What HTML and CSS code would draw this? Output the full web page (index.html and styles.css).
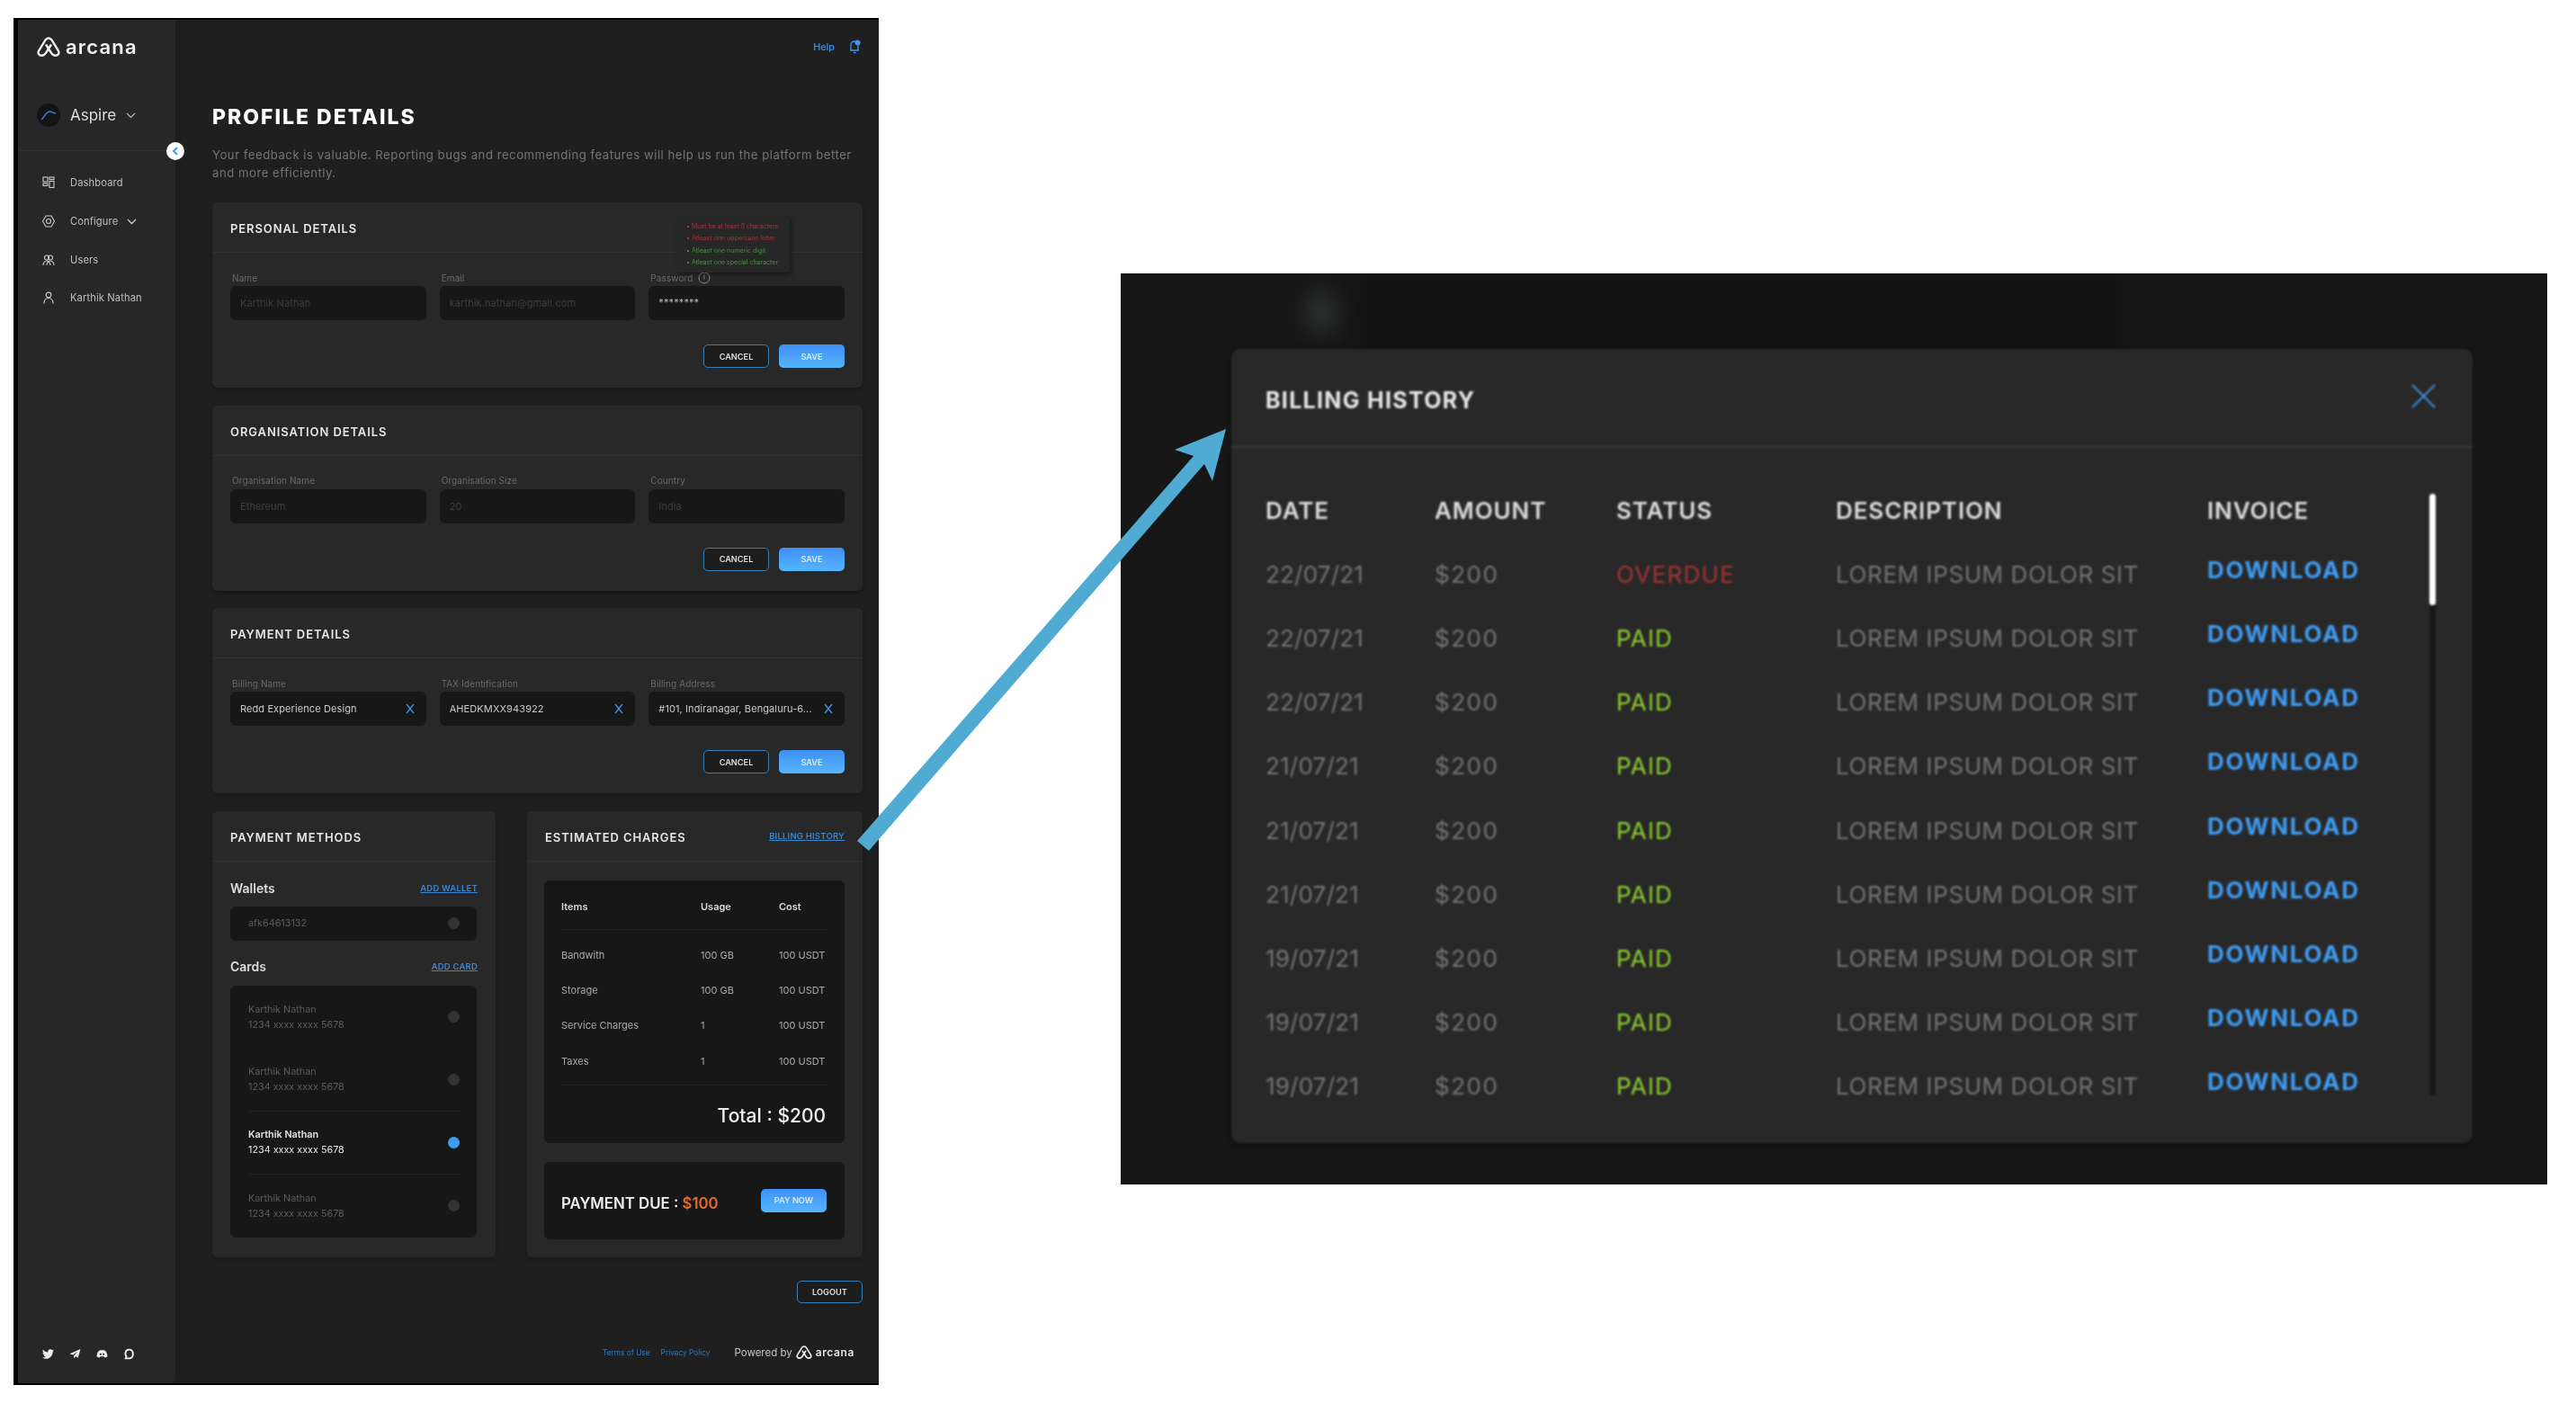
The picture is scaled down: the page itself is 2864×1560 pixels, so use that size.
FILE: index.html
```html
<!DOCTYPE html>
<html lang="en">

<head>
    <meta charset="UTF-8">
    <title>Profile Details</title>
    <link rel="stylesheet" href="styles.css">
</head>

<body>
    <div class="canvas">
        <!-- left screenshot: profile page -->
        <div class="app">
            <aside class="sidebar">
                <div class="logo">
                    <svg class="logo-mark" viewBox="0 0 26 22" fill="none" stroke="#eee" stroke-width="2.4" stroke-linejoin="round">
                        <path d="M13 1.5c-2.200 0-3.300 1.500-4.200 3L2.200 15.300c-1.700 2.900.2 5.500 3.200 5.500 2.200 0 3.500-1.200 4.600-2.900l6-9.400" />
                        <path d="M13 1.500c2.200 0 3.300 1.500 4.200 3l6.600 10.800c1.700 2.900-.2 5.500-3.200 5.500-2.200 0-3.500-1.200-4.600-2.900l-6-9.400" />
                    </svg>
                    <span class="logo-text">arcana</span>
                </div>
                <div class="workspace">
                    <span class="workspace-avatar">
                        <svg width="18" height="12" viewBox="0 0 18 12" fill="none" stroke="#3f74d6" stroke-width="1.5">
                            <path d="M1 11C4 9 6 2 10 2c3 0 4 2 7 2" />
                        </svg>
                    </span>
                    <span class="workspace-name">Aspire</span>
                    <svg class="chevron" width="11" height="7" viewBox="0 0 11 7" fill="none" stroke="#bbb" stroke-width="1.200">
                        <path d="M1 1l4.500 4.500L10 1" />
                    </svg>
                </div>
                <ul class="nav">
                    <li>
                        <svg viewBox="0 0 14 14" fill="none" stroke="#ccc" stroke-width="1.100">
                            <rect x="1" y="1" width="5" height="5" />
                            <rect x="8" y="1" width="5" height="2.500" />
                            <rect x="1" y="8" width="5" height="2.500" />
                            <rect x="8" y="5.500" width="5" height="7" />
                        </svg>
                        <span>Dashboard</span>
                    </li>
                    <li>
                        <svg viewBox="0 0 14 14" fill="none" stroke="#ccc" stroke-width="1.100">
                            <path d="M4 1h6l3.500 6L10 13H4L.5 7z" />
                            <circle cx="7" cy="7" r="2.500" />
                        </svg>
                        <span>Configure</span>
                        <svg class="chevron" width="11" height="7" viewBox="0 0 11 7" fill="none" stroke="#ccc" stroke-width="1.300">
                            <path d="M1 1l4.500 4.500L10 1" />
                        </svg>
                    </li>
                    <li>
                        <svg viewBox="0 0 14 14" fill="none" stroke="#ccc" stroke-width="1.100">
                            <circle cx="5" cy="4.500" r="2.500" />
                            <circle cx="9" cy="4.500" r="2.500" />
                            <path d="M1 13c0-3 2-5 4-5s4 2 4 5M5 13c0-3 2-5 4-5s4 2 4 5" />
                        </svg>
                        <span>Users</span>
                    </li>
                    <li>
                        <svg viewBox="0 0 14 14" fill="none" stroke="#ccc" stroke-width="1.200">
                            <circle cx="7" cy="4" r="2.800" />
                            <path d="M2 13.500c0-3.500 2-6 5-6s5 2.500 5 6" />
                        </svg>
                        <span>Karthik Nathan</span>
                    </li>
                </ul>
                <div class="social">
                    <svg viewBox="0 0 24 24" fill="#eee">
                        <path d="M23.953 4.57a10 10 0 01-2.825.775 4.958 4.958 0 002.163-2.723c-.951.555-2.005.959-3.127 1.184a4.920 4.920 0 00-8.384 4.482C7.690 8.095 4.067 6.130 1.640 3.162a4.822 4.822 0 00-.666 2.475c0 1.710.870 3.213 2.188 4.096a4.904 4.904 0 01-2.228-.616v.060a4.923 4.923 0 003.946 4.827 4.996 4.996 0 01-2.212.085 4.936 4.936 0 004.604 3.417 9.867 9.867 0 01-6.102 2.105c-.390 0-.779-.023-1.170-.067a13.995 13.995 0 007.557 2.209c9.053 0 13.998-7.496 13.998-13.985 0-.210 0-.420-.015-.630A9.935 9.935 0 0024 4.590z" />
                    </svg>
                    <svg viewBox="0 0 24 24" fill="#eee">
                        <path d="M23 2L1 11.500l6.500 2.500L17 7l-7.500 8.500V21l3.500-4 5 3z" />
                    </svg>
                    <svg viewBox="0 0 24 24" fill="#eee">
                        <path fill-rule="evenodd" d="M6 5c4-1 8-1 12 0 3 2 5 7 5 12-2 1.500-4 2-6 2.500L15.500 17h-7L7 19.500C5 19 3 18.500 1 17 1 12 3 7 6 5zm3 5.500a2 2 0 100 4 2 2 0 000-4zm6 0a2 2 0 100 4 2 2 0 000-4z" />
                    </svg>
                    <svg viewBox="0 0 24 24" fill="none" stroke="#eee" stroke-width="3.500">
                        <path d="M12 3c5 0 8 3.500 8 9s-3 9-8 9H5l1.500-4C5 15 4.500 13.500 4.500 12 4.500 6.500 7 3 12 3z" />
                    </svg>
                </div>
                <span class="collapse-btn">
                    <svg width="6" height="10" viewBox="0 0 6 10" fill="none" stroke="#3d94ee" stroke-width="1.800">
                        <path d="M5 1L1 5l4 4" />
                    </svg>
                </span>
            </aside>

            <main class="main">
                <div class="topbar">
                    <a class="help">Help</a>
                    <svg width="13" height="16" viewBox="0 0 13 16" fill="none" stroke="#3d94ee" stroke-width="1.300">
                        <path d="M2 12V6c0-2.500 1.500-4 4-4s4 1.500 4 4v6zM1 12h10M5 14.500h2.500" />
                        <circle cx="9.500" cy="3.500" r="3" fill="#3d94ee" stroke="none" />
                    </svg>
                </div>
                <h1 class="page-title">PROFILE DETAILS</h1>
                <p class="page-sub">Your feedback is valuable. Reporting bugs and recommending features will help us run the platform better and more efficiently.</p>

                <section class="card form-card">
                    <h2 class="card-head">PERSONAL DETAILS</h2>
                    <div class="fields">
                        <div class="field">
                            <label>Name</label>
                            <div class="input muted">Karthik Nathan</div>
                        </div>
                        <div class="field">
                            <label>Email</label>
                            <div class="input muted">karthik.nathan@gmail.com</div>
                        </div>
                        <div class="field">
                            <label>Password
                                <svg class="info" width="14" height="14" viewBox="0 0 14 14" fill="none" stroke="#8a8a8a">
                                    <circle cx="7" cy="7" r="6" />
                                    <path d="M7 3.500v5" />
                                </svg>
                            </label>
                            <div class="input pass">********</div>
                        </div>
                    </div>
                    <div class="actions">
                        <button class="btn btn-line">CANCEL</button>
                        <button class="btn btn-fill">SAVE</button>
                    </div>
                    <ul class="pass-tip">
                        <li class="bad">Must be at least 8 characters</li>
                        <li class="bad">Atleast one uppercase letter</li>
                        <li class="good">Atleast one numeric digit</li>
                        <li class="good">Atleast one special character</li>
                    </ul>
                </section>

                <section class="card form-card">
                    <h2 class="card-head">ORGANISATION DETAILS</h2>
                    <div class="fields">
                        <div class="field">
                            <label>Organisation Name</label>
                            <div class="input muted">Ethereum</div>
                        </div>
                        <div class="field">
                            <label>Organisation Size</label>
                            <div class="input muted">20</div>
                        </div>
                        <div class="field">
                            <label>Country</label>
                            <div class="input muted">India</div>
                        </div>
                    </div>
                    <div class="actions">
                        <button class="btn btn-line">CANCEL</button>
                        <button class="btn btn-fill">SAVE</button>
                    </div>
                </section>

                <section class="card form-card">
                    <h2 class="card-head">PAYMENT DETAILS</h2>
                    <div class="fields">
                        <div class="field">
                            <label>Billing Name</label>
                            <div class="input">
                                <span class="input-text">Redd Experience Design</span>
                                <svg class="clear" viewBox="0 0 10 10" stroke="#3d94ee" stroke-width="1.300"><path d="M1 0l8 10M9 0L1 10" /></svg>
                            </div>
                        </div>
                        <div class="field">
                            <label>TAX Identification</label>
                            <div class="input">
                                <span class="input-text">AHEDKMXX943922</span>
                                <svg class="clear" viewBox="0 0 10 10" stroke="#3d94ee" stroke-width="1.300"><path d="M1 0l8 10M9 0L1 10" /></svg>
                            </div>
                        </div>
                        <div class="field">
                            <label>Billing Address</label>
                            <div class="input">
                                <span class="input-text">#101, Indiranagar, Bengaluru-6...</span>
                                <svg class="clear" viewBox="0 0 10 10" stroke="#3d94ee" stroke-width="1.300"><path d="M1 0l8 10M9 0L1 10" /></svg>
                            </div>
                        </div>
                    </div>
                    <div class="actions">
                        <button class="btn btn-line">CANCEL</button>
                        <button class="btn btn-fill">SAVE</button>
                    </div>
                </section>

                <div class="two-col">
                    <section class="card">
                        <h2 class="card-head">PAYMENT METHODS</h2>
                        <div class="methods">
                            <div class="method-head">
                                <h3>Wallets</h3>
                                <a class="link">ADD WALLET</a>
                            </div>
                            <div class="wallet">
                                <span>afk64613132</span>
                                <i class="dot"></i>
                            </div>
                            <div class="method-head cards-head">
                                <h3>Cards</h3>
                                <a class="link">ADD CARD</a>
                            </div>
                            <ul class="card-list">
                                <li>
                                    <div>Karthik Nathan<br>1234 xxxx xxxx 5678</div>
                                    <i class="dot"></i>
                                </li>
                                <li>
                                    <div>Karthik Nathan<br>1234 xxxx xxxx 5678</div>
                                    <i class="dot"></i>
                                </li>
                                <li class="selected">
                                    <div><b>Karthik Nathan</b><br>1234 xxxx xxxx 5678</div>
                                    <i class="dot"></i>
                                </li>
                                <li>
                                    <div>Karthik Nathan<br>1234 xxxx xxxx 5678</div>
                                    <i class="dot"></i>
                                </li>
                            </ul>
                        </div>
                    </section>

                    <section class="card">
                        <h2 class="card-head card-head-link">ESTIMATED CHARGES <a class="link">BILLING HISTORY</a></h2>
                        <div class="charges">
                            <div class="charge-box">
                                <div class="charge-row charge-title"><span>Items</span><span>Usage</span><span>Cost</span></div>
                                <div class="charge-list">
                                    <div class="charge-row"><span>Bandwith</span><span>100 GB</span><span>100 USDT</span></div>
                                    <div class="charge-row"><span>Storage</span><span>100 GB</span><span>100 USDT</span></div>
                                    <div class="charge-row"><span>Service Charges</span><span>1</span><span>100 USDT</span></div>
                                    <div class="charge-row"><span>Taxes</span><span>1</span><span>100 USDT</span></div>
                                </div>
                                <div class="charge-total">Total : $200</div>
                            </div>
                            <div class="due-box">
                                <span class="due-text">PAYMENT DUE : <em>$100</em></span>
                                <button class="btn btn-fill">PAY NOW</button>
                            </div>
                        </div>
                    </section>
                </div>

                <div class="logout-row">
                    <button class="btn btn-line">LOGOUT</button>
                </div>

                <footer class="footer">
                    <a class="foot-link">Terms of Use</a>
                    <a class="foot-link">Privacy Policy</a>
                    <span class="powered">Powered by</span>
                    <svg class="foot-logo" viewBox="0 0 26 22" fill="none" stroke="#eee" stroke-width="2.400" stroke-linejoin="round">
                        <path d="M13 1.5c-2.200 0-3.300 1.500-4.200 3L2.200 15.300c-1.700 2.900.2 5.500 3.200 5.500 2.200 0 3.500-1.200 4.600-2.900l6-9.400" />
                        <path d="M13 1.500c2.200 0 3.300 1.500 4.200 3l6.600 10.800c1.700 2.900-.2 5.500-3.200 5.500-2.200 0-3.500-1.200-4.600-2.900l-6-9.400" />
                    </svg>
                    <span class="foot-word">arcana</span>
                </footer>
            </main>
        </div>

        <!-- right screenshot: billing history modal -->
        <div class="backdrop">
            <div class="backdrop-shade"></div>
            <div class="backdrop-blob"></div>
            <div class="modal">
                <div class="modal-head">
                    <h2>BILLING HISTORY</h2>
                    <svg class="modal-close" viewBox="0 0 28 28" stroke="#3d8fdc" stroke-width="2">
                        <path d="M1 1l26 26M27 1L1 27" />
                    </svg>
                </div>
                <div class="modal-body">
                    <div class="history">
                        <div class="h-row h-title"><span>DATE</span><span>AMOUNT</span><span>STATUS</span><span>DESCRIPTION</span><span>INVOICE</span></div>
                        <div class="h-row"><span class="h-date">22/07/21</span><span class="h-amount">$200</span><span class="overdue">OVERDUE</span><span>LOREM IPSUM DOLOR SIT</span><a class="download">DOWNLOAD</a></div>
                        <div class="h-row"><span class="h-date">22/07/21</span><span class="h-amount">$200</span><span class="paid">PAID</span><span>LOREM IPSUM DOLOR SIT</span><a class="download">DOWNLOAD</a></div>
                        <div class="h-row"><span class="h-date">22/07/21</span><span class="h-amount">$200</span><span class="paid">PAID</span><span>LOREM IPSUM DOLOR SIT</span><a class="download">DOWNLOAD</a></div>
                        <div class="h-row"><span class="h-date">21/07/21</span><span class="h-amount">$200</span><span class="paid">PAID</span><span>LOREM IPSUM DOLOR SIT</span><a class="download">DOWNLOAD</a></div>
                        <div class="h-row"><span class="h-date">21/07/21</span><span class="h-amount">$200</span><span class="paid">PAID</span><span>LOREM IPSUM DOLOR SIT</span><a class="download">DOWNLOAD</a></div>
                        <div class="h-row"><span class="h-date">21/07/21</span><span class="h-amount">$200</span><span class="paid">PAID</span><span>LOREM IPSUM DOLOR SIT</span><a class="download">DOWNLOAD</a></div>
                        <div class="h-row"><span class="h-date">19/07/21</span><span class="h-amount">$200</span><span class="paid">PAID</span><span>LOREM IPSUM DOLOR SIT</span><a class="download">DOWNLOAD</a></div>
                        <div class="h-row"><span class="h-date">19/07/21</span><span class="h-amount">$200</span><span class="paid">PAID</span><span>LOREM IPSUM DOLOR SIT</span><a class="download">DOWNLOAD</a></div>
                        <div class="h-row"><span class="h-date">19/07/21</span><span class="h-amount">$200</span><span class="paid">PAID</span><span>LOREM IPSUM DOLOR SIT</span><a class="download">DOWNLOAD</a></div>
                    </div>
                    <div class="scroll-track"><div class="scroll-thumb"></div></div>
                </div>
            </div>
        </div>

        <!-- arrow lies over both screenshots -->
        <svg class="arrow" width="2864" height="1560" viewBox="0 0 2864 1560">
            <polygon fill="#4fabd2" points="953,935 1327,507 1306,500 1363,477 1348,535 1339,516 966,946" />
        </svg>
    </div>
</body>

</html>
```

FILE: styles.css
```css
* {
    padding: 0;
    margin: 0;
    box-sizing: border-box;
    list-style: none;
}

body {
    background: #fff;
    font-family: Inter, "Liberation Sans", sans-serif;
}

.canvas {
    position: relative;
    display: flex;
    align-items: flex-start;
    width: 2864px;
    height: 1560px;
    padding: 20px 0 0 15px;
    overflow: hidden;
}

/* app */
.app {
    display: flex;
    width: 962px;
    height: 1520px;
    background: #1f1f1f;
    border: solid #000;
    border-width: 2px 0 2px 5px;
    filter: blur(0.6px);
}

.sidebar {
    position: relative;
    display: flex;
    flex-direction: column;
    width: 175px;
    background: #272727;
    border-bottom-right-radius: 6px;
    box-shadow: 2px 0 4px rgba(0, 0, 0, 0.15);
}

.logo {
    display: flex;
    align-items: center;
    gap: 6px;
    height: 22px;
    margin: 19px 0 0 21px;
}

.logo-mark {
    width: 26px;
    height: 22px;
}

.logo-text {
    font-size: 22px;
    font-weight: 600;
    letter-spacing: 1.2px;
    color: #eee;
}

.workspace {
    display: flex;
    align-items: center;
    height: 83px;
    margin-top: 22px;
    padding: 4px 0 0 21px;
    border-bottom: 1px solid #2f2f2f;
}

.workspace-avatar {
    display: flex;
    align-items: center;
    justify-content: center;
    width: 26px;
    height: 26px;
    border-radius: 50%;
    background: #141414;
}

.workspace-name {
    margin: 0 11px;
    font-size: 17px;
    color: #ddd;
}

.nav {
    margin-top: 14px;
}

.nav li {
    display: flex;
    align-items: center;
    height: 42.7px;
    padding-left: 27px;
    font-size: 11.2px;
    letter-spacing: 0.1px;
    color: #bdbdbd;
}

.nav li > svg:first-child {
    width: 14px;
    height: 14px;
    margin-right: 17px;
}

.nav .chevron {
    margin-left: 10px;
}

.social {
    display: flex;
    align-items: center;
    gap: 17px;
    margin: auto 0 26px 27px;
}

.social svg {
    width: 13px;
    height: 13px;
}

.collapse-btn {
    position: absolute;
    top: 136px;
    right: -10px;
    display: flex;
    align-items: center;
    justify-content: center;
    width: 20px;
    height: 20px;
    border-radius: 50%;
    background: #fff;
}

.main {
    flex: 1;
    padding: 0 18px 0 41px;
}

.topbar {
    display: flex;
    align-items: center;
    justify-content: flex-end;
    gap: 16px;
    height: 60px;
    padding-right: 2px;
}

.help {
    font-size: 10.8px;
    font-weight: 500;
    color: #3d94ee;
}

.page-title {
    height: 26px;
    margin-top: 35px;
    font-size: 23px;
    line-height: 26px;
    letter-spacing: 2px;
    font-weight: 800;
    color: #fff;
}

.page-sub {
    margin: 19px 0 23px;
    font-size: 13.2px;
    line-height: 20px;
    letter-spacing: 0.5px;
    color: #747474;
}

.card {
    background: #282828;
    border-radius: 6px;
    box-shadow: 0 2px 4px rgba(0, 0, 0, 0.25);
}

.card-head {
    height: 56px;
    padding: 0 20px;
    border-bottom: 1px solid #313131;
    font-size: 13px;
    line-height: 58px;
    letter-spacing: 0.9px;
    font-weight: 600;
    color: #e6e6e6;
}

.card-head-link {
    display: flex;
    justify-content: space-between;
}

.form-card {
    position: relative;
    height: 206px;
    margin-bottom: 19.67px;
}

.fields {
    display: grid;
    grid-template-columns: repeat(3, 1fr);
    gap: 15px;
    padding: 21.5px 20px 0;
}

.field label {
    display: flex;
    align-items: center;
    gap: 6px;
    height: 12px;
    margin: 0 0 3.5px 2px;
    font-size: 10px;
    letter-spacing: 0.1px;
    color: #6a6a6a;
}

.info {
    flex: none;
}

.input {
    display: flex;
    align-items: center;
    justify-content: space-between;
    height: 38px;
    padding: 0 13px 0 11px;
    background: #171717;
    border-radius: 6px;
    font-size: 11px;
    letter-spacing: 0.1px;
    color: #c8c8c8;
}

.input.muted {
    color: #3e3e3e;
}

.input.pass {
    padding-bottom: 3px;
    color: #b5b5b5;
}

.clear {
    flex: none;
    width: 10px;
    height: 12px;
}

.actions {
    display: flex;
    justify-content: flex-end;
    gap: 11px;
    margin: 27px 20px 0;
}

.btn {
    width: 73px;
    height: 26px;
    border: 0;
    border-radius: 5px;
    font-family: Inter, sans-serif;
    font-size: 9.2px;
    font-weight: 600;
    color: #fff;
}

.btn-line {
    background: #1d1d1d;
    border: 1.5px solid #357fb8;
    color: #ddd;
}

.btn-fill {
    background: linear-gradient(180deg, #3f8ff5, #55b6fb);
    color: #d6ecff;
}

.pass-tip {
    position: absolute;
    top: 15px;
    left: 517px;
    width: 125px;
    height: 63px;
    padding: 5px 0 0 11px;
    background: #272727;
    border-radius: 4px;
    box-shadow: 2px 3px 5px rgba(0, 0, 0, 0.35);
    font-size: 7px;
    line-height: 13.3px;
}

.pass-tip li {
    position: relative;
    padding-left: 5px;
}

.pass-tip li::before {
    content: "";
    position: absolute;
    left: 0;
    top: 6px;
    width: 2px;
    height: 2px;
    background: currentColor;
}

.pass-tip .bad {
    color: #a33535;
}

.pass-tip .good {
    color: #4d8c46;
}

.two-col {
    display: grid;
    grid-template-columns: 315px 373px;
    gap: 35px;
}

.two-col .card {
    height: 496px;
}

.methods {
    padding: 20px 21px 0 20px;
}

.method-head {
    display: flex;
    align-items: center;
    justify-content: space-between;
    height: 20px;
    margin-bottom: 10px;
}

.method-head h3 {
    font-size: 14px;
    font-weight: 600;
    color: #ddd;
}

.method-head .link {
    margin-right: -1px;
}

.cards-head {
    margin: 19px 0 11px;
}

.link {
    font-size: 9.5px;
    font-weight: 600;
    letter-spacing: 0.2px;
    text-decoration: underline;
    color: #3b86cf;
}

.card-head-link .link {
    line-height: 56px;
}

.wallet {
    display: flex;
    align-items: center;
    justify-content: space-between;
    height: 38px;
    padding: 0 19px 0 20px;
    background: #171717;
    border-radius: 6px;
    font-size: 10.8px;
    color: #5c5c5c;
}

.dot {
    width: 13px;
    height: 13px;
    border-radius: 50%;
    background: #333;
}

.card-list {
    height: 280px;
    padding: 0 19px 0 20px;
    background: #171717;
    border-radius: 6px;
}

.card-list li {
    display: flex;
    align-items: center;
    justify-content: space-between;
    height: 70px;
    border-bottom: 1px solid #212121;
    font-size: 10.8px;
    line-height: 17px;
    color: #5c5c5c;
}

.card-list li:first-child,
.card-list li:last-child {
    border-bottom: 0;
}

.card-list .selected {
    color: #e4e4e4;
}

.selected b {
    font-weight: 600;
}

.selected .dot {
    background: #3f9cf0;
}

.charges {
    padding: 21px 20px 0 19px;
}

.charge-box {
    height: 292px;
    padding: 0 21px 0 19px;
    background: #171717;
    border-radius: 6px;
}

.charge-row {
    display: grid;
    grid-template-columns: 155px 87px 1fr;
    align-items: center;
    height: 39.4px;
    font-size: 11px;
    color: #a8a8a8;
}

.charge-row span:last-child {
    white-space: nowrap;
}

.charge-title {
    height: 55px;
    padding-top: 5px;
    border-bottom: 1px solid #212121;
    font-weight: 600;
    color: #d8d8d8;
}

.charge-list {
    padding: 8px 0 6px;
    border-bottom: 1px solid #212121;
}

.charge-total {
    margin-top: 21px;
    text-align: right;
    font-size: 21px;
    font-weight: 500;
    color: #eee;
}

.due-box {
    display: flex;
    align-items: center;
    justify-content: space-between;
    height: 86px;
    margin-top: 21px;
    padding: 0 20px 0 19px;
    background: #171717;
    border-radius: 6px;
}

.due-text {
    padding-top: 6px;
    font-size: 16.8px;
    font-weight: 600;
    color: #eee;
}

.due-text em {
    font-style: normal;
    color: #e26a2c;
}

.logout-row {
    display: flex;
    justify-content: flex-end;
    margin-top: 26px;
}

.logout-row .btn {
    height: 25px;
    color: #ddd;
}

.footer {
    display: flex;
    align-items: center;
    justify-content: flex-end;
    height: 20px;
    margin-top: 45px;
    padding-right: 9px;
}

.foot-link {
    margin-right: 12px;
    font-size: 8.3px;
    color: #3278b8;
}

.powered {
    margin: 0 4px 0 15px;
    font-size: 11.5px;
    color: #c4c4c4;
}

.foot-logo {
    width: 18px;
    height: 15px;
    margin-right: 4px;
}

.foot-word {
    font-family: Inter, sans-serif;
    font-size: 12px;
    font-weight: 600;
    letter-spacing: 0.6px;
    color: #e4e4e4;
}

/* billing history screenshot */
.backdrop {
    position: relative;
    width: 1586px;
    height: 1013px;
    margin: 284px 0 0 269px;
    padding: 84px 0 0 123px;
    background: #171717;
    overflow: hidden;
}

.backdrop-shade {
    position: absolute;
    top: 0;
    left: 265px;
    width: 850px;
    height: 120px;
    background: #121212;
    filter: blur(8px);
}

.backdrop-blob {
    position: absolute;
    top: 18px;
    left: 205px;
    width: 36px;
    height: 50px;
    border-radius: 50%;
    background: #2a2e2c;
    filter: blur(10px);
}

.modal {
    position: relative;
    width: 1380px;
    height: 883px;
    background: #282828;
    border-radius: 10px;
    box-shadow: 0 3px 8px rgba(0, 0, 0, 0.4);
    filter: blur(0.9px);
}

.modal-head {
    display: flex;
    align-items: center;
    justify-content: space-between;
    height: 110px;
    padding: 0 41px 0 38px;
    border-bottom: 2px solid #383838;
}

.modal-head h2 {
    padding-top: 6px;
    font-size: 25px;
    letter-spacing: 1.3px;
    font-weight: 700;
    color: #e8e8e8;
}

.modal-close {
    width: 27px;
    height: 27px;
    margin-bottom: 4px;
}

.modal-body {
    display: flex;
    padding: 34px 41px 0 38px;
}

.history {
    width: 1294px;
}

.h-row {
    display: grid;
    grid-template-columns: 188px 202px 244px 413px 1fr;
    align-items: center;
    height: 71.1px;
    font-size: 26px;
    letter-spacing: 0.6px;
    color: #747474;
}

.h-title {
    font-weight: 600;
    letter-spacing: 0.9px;
    color: #dcdcdc;
}

.h-date {
    letter-spacing: 0.2px;
}

.h-amount {
    letter-spacing: 1.5px;
}

.overdue {
    letter-spacing: 1.3px;
    color: #a63232;
}

.paid {
    letter-spacing: 1.15px;
    color: #8ed02e;
}

.download {
    padding-bottom: 10px;
    font-weight: 700;
    letter-spacing: 1.7px;
    color: #3f9bf0;
}

.scroll-track {
    flex: none;
    width: 7px;
    height: 669px;
    margin-top: 17px;
    background: #171717;
    border-radius: 4px;
}

.scroll-thumb {
    height: 124px;
    background: #fff;
    border-radius: 4px;
}

.arrow {
    position: absolute;
    top: 0;
    left: 0;
    pointer-events: none;
}
```
